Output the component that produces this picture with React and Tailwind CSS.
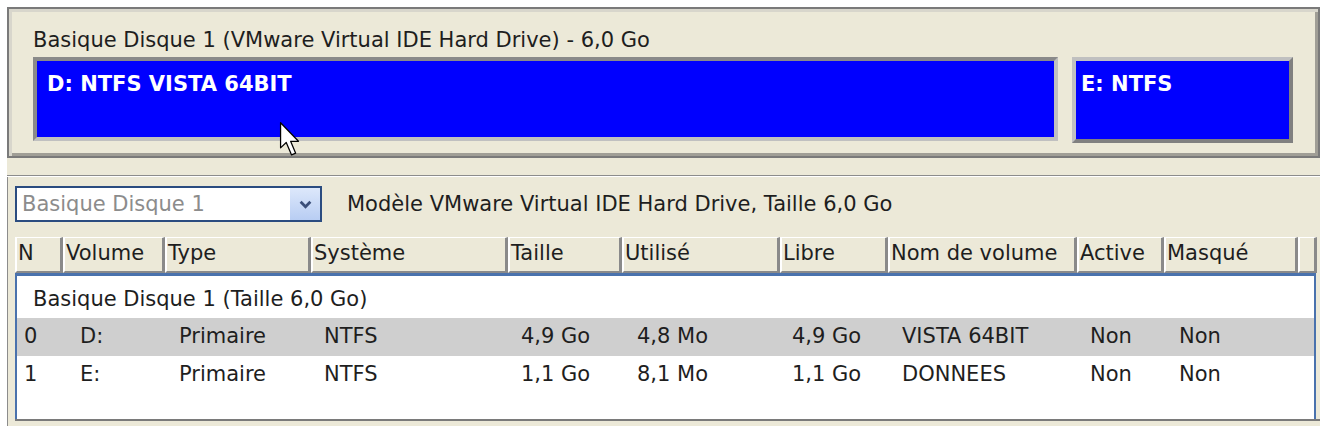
import React from 'react';

// Disk map + partition table, Swing-style on a beige dialog.

const cols = [
  { label: 'N', w: 48 },
  { label: 'Volume', w: 102 },
  { label: 'Type', w: 146 },
  { label: 'Système', w: 197 },
  { label: 'Taille', w: 114 },
  { label: 'Utilisé', w: 158 },
  { label: 'Libre', w: 108 },
  { label: 'Nom de volume', w: 189 },
  { label: 'Active', w: 87 },
  { label: 'Masqué', w: 134 },
  { label: '', w: 19 },
];

const rows = [
  ['0', 'D:', 'Primaire', 'NTFS', '4,9 Go', '4,8 Mo', '4,9 Go', 'VISTA 64BIT', 'Non', 'Non'],
  ['1', 'E:', 'Primaire', 'NTFS', '1,1 Go', '8,1 Mo', '1,1 Go', 'DONNEES', 'Non', 'Non'],
];

const cellPad = ['pl-[7px]', 'pl-[17px]', 'pl-[14px]', 'pl-[13px]', 'pl-[13px]', 'pl-[15px]', 'pl-[12px]', 'pl-[14px]', 'pl-[13px]', 'pl-[15px]'];

export default function App() {
  return (
    <div className="relative w-[1326px] h-[426px] overflow-hidden bg-white pl-[7px] pt-[7px] font-['DejaVu_Sans',sans-serif] text-[21px] text-[#1e1e1e]">
      <div className="w-[1313px] h-[419px] bg-[#ECE9D8] flex flex-col">
        {/* ─── Disk map panel ─── */}
        <div className="h-[151px] border-[2px] border-[#7a7a7a] shadow-[inset_3px_3px_0_#d8d6cc,inset_-3px_-3px_0_#a09e96] flex flex-col pl-[24px] pr-[18px] pt-[19px]">
          <p className="leading-[24px] whitespace-nowrap">Basique Disque 1 (VMware Virtual IDE Hard Drive) - 6,0 Go</p>
          <div className="flex gap-[14px] mt-[5px]">
            <div className="w-[1025px] h-[84px] border-[4px] border-[#8a8a8a] border-b-[#c0c0c0] border-r-[#c0c0c0] bg-[#0000FF] pl-[10px] pt-[11px]">
              <p className="font-bold text-white leading-[24px] whitespace-nowrap">D: NTFS VISTA 64BIT</p>
            </div>
            <div className="w-[221px] h-[86px] border-[4px] border-[#c0c0c0] border-b-[#808080] border-r-[#808080] bg-[#0000FF] pl-[5px] pt-[11px]">
              <p className="font-bold text-white leading-[24px] whitespace-nowrap">E: NTFS</p>
            </div>
          </div>
        </div>

        <div className="h-[17px]" />
        <div className="h-[2px] bg-[#8c8c8c] border-b border-white" />

        {/* ─── Partition list ─── */}
        <div className="flex-1 flex flex-col border-l-[1px] border-[#8c8c8c] pl-[7px]">
          <div className="flex items-center gap-[25px] mt-[9px] h-[36px]">
            <div className="w-[307px] h-[36px] border-[2px] border-[#2b4c80] bg-white flex items-center justify-between">
              <span className="pl-[5px] text-[#8c8c8c] leading-[24px]">Basique Disque 1</span>
              <span className="w-[30px] h-full bg-gradient-to-b from-[#dde8fb] to-[#b8cdf3] flex items-center justify-center">
                <svg viewBox="0 0 12 8" className="w-[13px] h-[9px]">
                  <path d="M1.5 1.5 L6 6 L10.5 1.5" fill="none" stroke="#3b4f7a" strokeWidth="2.6" />
                </svg>
              </span>
            </div>
            <span className="leading-[24px] whitespace-nowrap">Modèle VMware Virtual IDE Hard Drive, Taille 6,0 Go</span>
          </div>

          {/* header */}
          <div className="flex mt-[15px] h-[36px]">
            {cols.map((c, i) => (
              <div
                key={i}
                style={{ width: c.w }}
                className="h-full border-t border-l-[2px] border-white border-r-[3px] border-r-[#8a8a8a] border-b-[2px] border-b-[#8a8a8a] pl-[1px] leading-[30px] whitespace-nowrap overflow-hidden"
              >
                {c.label}
              </div>
            ))}
          </div>

          {/* body */}
          <div className="w-[1301px] h-[146px] border-t-[3px] border-l-[2px] border-r-[2px] border-[#4a72ad] bg-white pt-[4px]">
            <p className="pl-[16px] leading-[38px] h-[38px] whitespace-nowrap">Basique Disque 1 (Taille 6,0 Go)</p>
            {rows.map((r, ri) => (
              <div key={ri} className={`flex h-[38px] items-center ${ri === 0 ? 'bg-[#cfcfcf]' : ''}`}>
                {r.map((v, ci) => (
                  <div
                    key={ci}
                    style={{ width: ci === 0 ? cols[0].w - 2 : cols[ci].w }}
                    className={`${cellPad[ci]} whitespace-nowrap shrink-0`}
                  >
                    {v}
                  </div>
                ))}
              </div>
            ))}
          </div>
          <div className="h-[2px] bg-[#7a7a7a]" />
        </div>
      </div>

      {/* mouse pointer */}
      <svg viewBox="0 0 14 24" className="absolute left-[279px] top-[121px] w-[22px] h-[38px]">
        <path d="M1 1 L1 17 L4.6 13.6 L8 21.5 L10.6 20.4 L7.4 12.8 L12.4 12.8 Z" fill="#ffffff" stroke="#000000" strokeWidth="0.8" strokeLinejoin="round" />
      </svg>
    </div>
  );
}
